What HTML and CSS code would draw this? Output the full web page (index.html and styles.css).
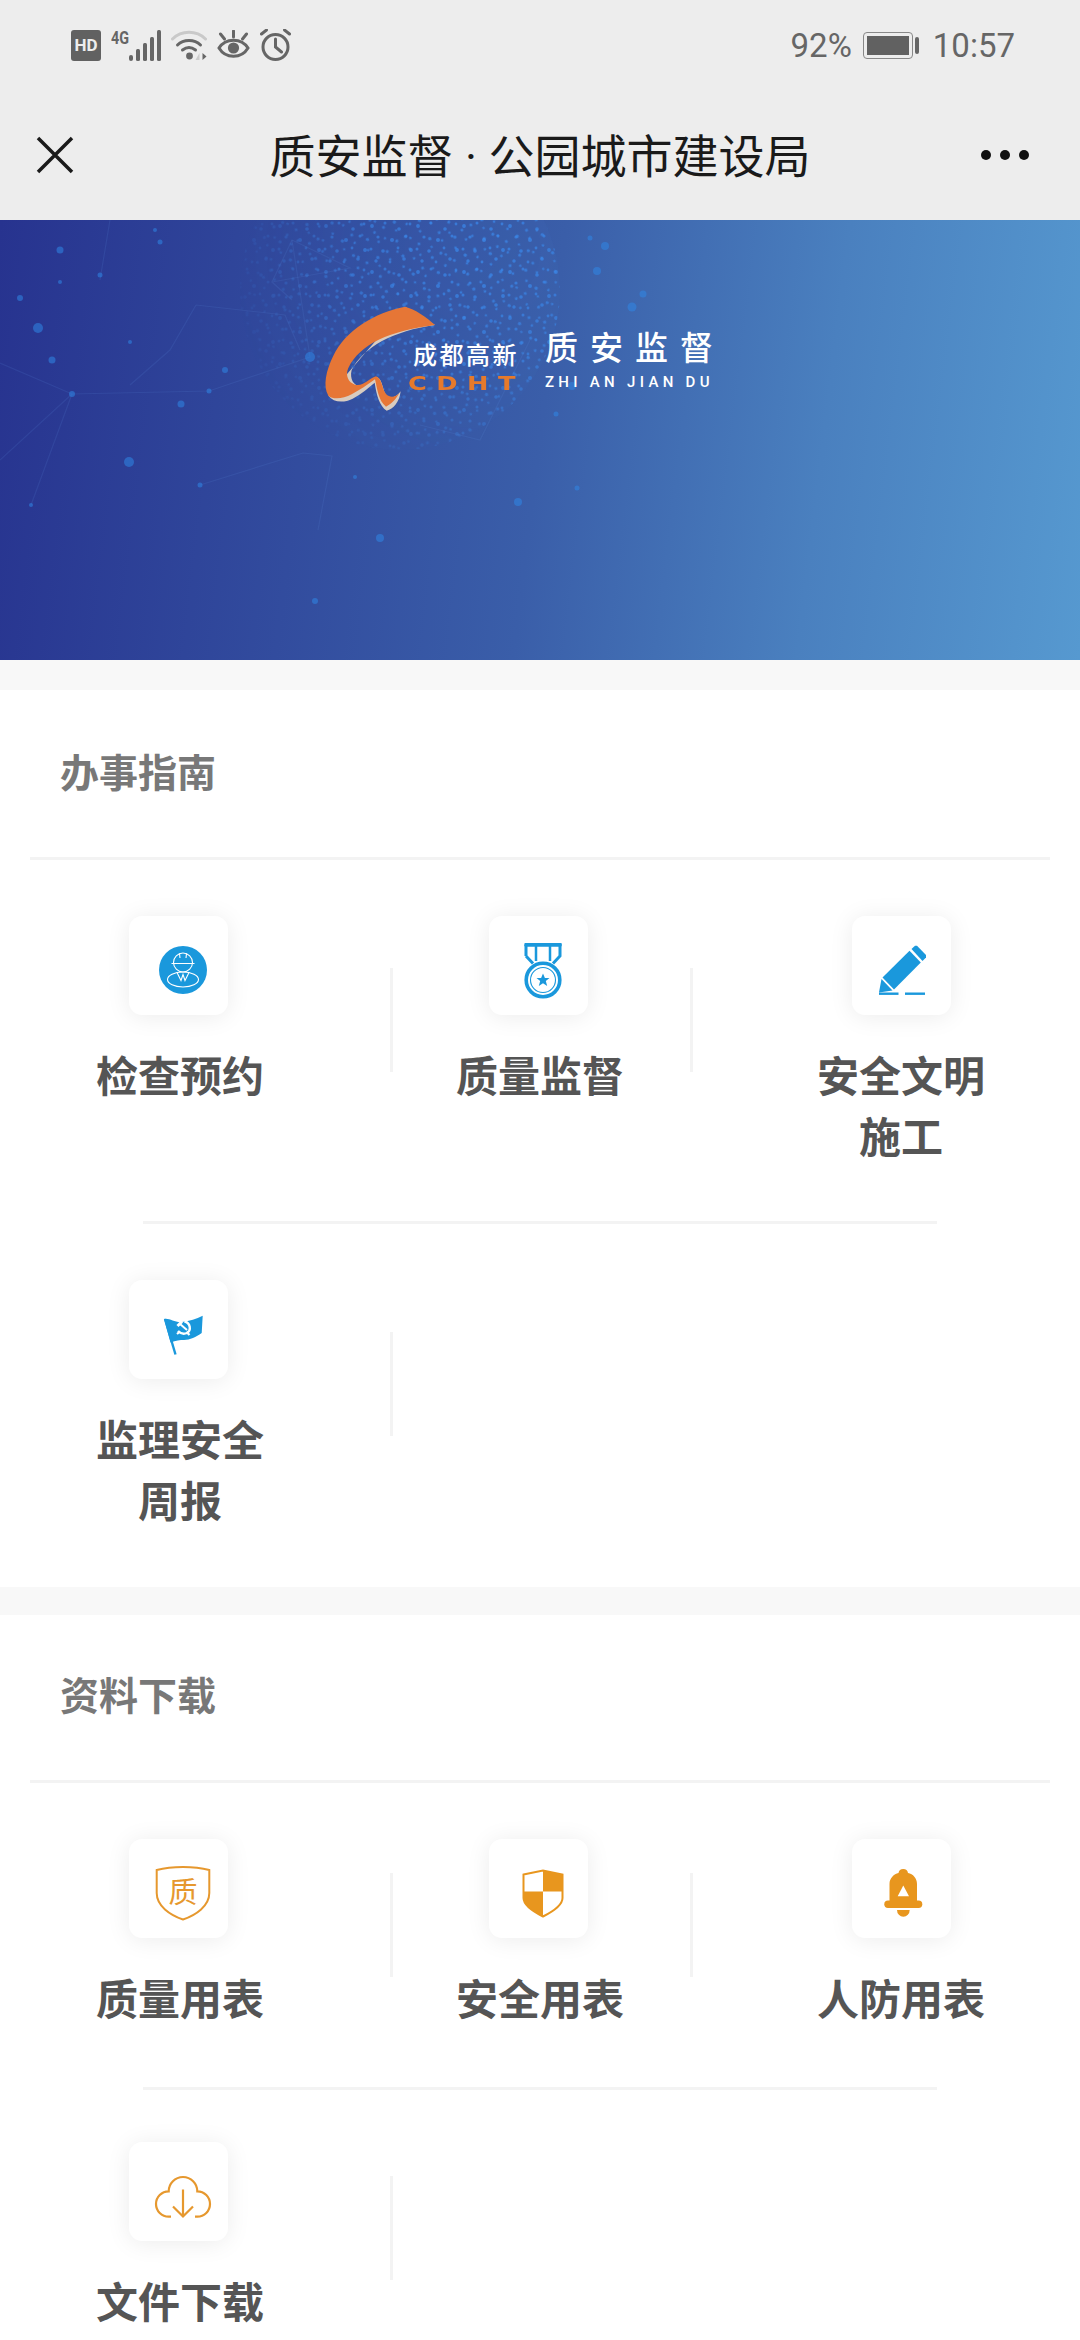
FILE: index.html
```html
<!DOCTYPE html>
<html lang="zh-CN">
<head>
    <meta charset="UTF-8">
    <meta name="viewport" content="width=device-width, initial-scale=1.0">
    <title>质安监督 · 公园城市建设局</title>
    <link rel="stylesheet" href="styles.css">
</head>
<body>
    <header class="top-bar">
        <div class="status-bar">
            <div class="status-left">
                <span class="hd-badge">HD</span>
                <svg class="status-icon" width="50" height="32" viewBox="0 0 50 32">
                    <text class="net-label" x="0" y="15" textLength="18" lengthAdjust="spacingAndGlyphs">4G</text>
                    <rect x="18" y="26" width="4" height="6" rx="2"/>
                    <rect x="25" y="20" width="4" height="12" rx="1.5"/>
                    <rect x="32" y="14" width="4" height="18" rx="1.5"/>
                    <rect x="39" y="8" width="4" height="24" rx="1.5"/>
                    <rect x="46" y="1" width="4" height="31" rx="1.5"/>
                </svg>
                <svg class="status-icon" width="36" height="32" viewBox="0 0 35 32">
                    <path d="M1 10C10 1 25 1 34 10" fill="none" stroke="#c9c9c9" stroke-width="3" stroke-linecap="round"/>
                    <path d="M6 16C12 10 23 10 29 16" fill="none" stroke="#666" stroke-width="3" stroke-linecap="round"/>
                    <path d="M11 21C15 18 20 18 24 21" fill="none" stroke="#666" stroke-width="3" stroke-linecap="round"/>
                    <circle cx="18" cy="27" r="3.4"/>
                    <path d="M24 31L28 24V31Z" fill="#ccc"/>
                    <path d="M31 24L35 27.5L31 31Z"/>
                </svg>
                <svg class="status-icon" width="33" height="30" viewBox="0 0 32 30">
                    <path d="M1.5 18C8 7.5 24 7.5 30.5 18C24 29 8 29 1.5 18Z" fill="none" stroke="#666" stroke-width="3"/>
                    <circle cx="16" cy="18" r="5.6"/>
                    <path d="M16 1V7M3 4L7 9M29 4L25 9" fill="none" stroke="#666" stroke-width="3" stroke-linecap="round"/>
                </svg>
                <svg class="status-icon" width="31" height="32" viewBox="0 0 30 32">
                    <circle cx="15" cy="18" r="12.5" fill="none" stroke="#666" stroke-width="3"/>
                    <path d="M15 10V18L21 23M1 5L6 1M29 5L24 1" fill="none" stroke="#666" stroke-width="3" stroke-linecap="round"/>
                </svg>
            </div>
            <div class="status-right">
                <span>92%</span>
                <span class="battery"><span class="battery-level"></span></span>
                <span>10:57</span>
            </div>
        </div>
        <nav class="nav-bar">
            <svg class="nav-close" width="38" height="38" viewBox="0 0 38 38">
                <path d="M2 2L36 36M36 2L2 36" fill="none" stroke="#1a1a1a" stroke-width="3.5"/>
            </svg>
            <h1 class="nav-title">质安监督 · 公园城市建设局</h1>
            <div class="nav-more"><i></i><i></i><i></i></div>
        </nav>
    </header>

    <section class="banner">
        <!-- 背景的地球和光点 -->
        <svg class="banner-bg" width="1080" height="440" viewBox="0 0 1080 440">
            <defs>
                <pattern id="dotsA" width="46" height="46" patternUnits="userSpaceOnUse">
                    <circle cx="4" cy="6" r="1.9"/><circle cx="17" cy="3" r="1.5"/><circle cx="31" cy="9" r="1.8"/>
                    <circle cx="42" cy="4" r="1.4"/><circle cx="10" cy="17" r="1.6"/><circle cx="24" cy="20" r="2"/>
                    <circle cx="38" cy="16" r="1.5"/><circle cx="3" cy="29" r="1.5"/><circle cx="15" cy="31" r="1.8"/>
                    <circle cx="30" cy="28" r="1.4"/><circle cx="43" cy="30" r="1.9"/><circle cx="8" cy="41" r="1.7"/>
                    <circle cx="22" cy="42" r="1.4"/><circle cx="36" cy="39" r="1.8"/>
                </pattern>
                <pattern id="dotsB" href="#dotsA" patternTransform="translate(17 23) rotate(25) scale(0.85)"/>
                <radialGradient id="globeFade" gradientUnits="userSpaceOnUse" cx="480" cy="30" r="270">
                    <stop offset="0" stop-color="#fff"/>
                    <stop offset="0.45" stop-color="#fff" stop-opacity="0.8"/>
                    <stop offset="0.75" stop-color="#fff" stop-opacity="0.28"/>
                    <stop offset="1" stop-color="#fff" stop-opacity="0"/>
                </radialGradient>
                <mask id="globeMask">
                    <rect x="200" y="0" width="380" height="300" fill="url(#globeFade)"/>
                </mask>
            </defs>
            <g mask="url(#globeMask)">
                <circle class="globe-tint" cx="400" cy="70" r="160"/>
                <circle cx="400" cy="70" r="160" fill="url(#dotsA)"/>
                <circle cx="400" cy="70" r="160" fill="url(#dotsB)"/>
            </g>
            <g class="net-lines">
                <path d="M0 143L72 174L209 171L310 137L292 20"/>
                <path d="M72 174L31 285M0 240L72 174"/>
                <path d="M303 233L200 265M303 233L332 236L318 310"/>
                <path d="M292 80L272 62L350 48L292 20L272 62"/>
                <path d="M196 85L285 95L300 130M196 85L170 130L130 165"/>
                <path d="M110 0L100 60M530 120L480 220L420 205"/>
            </g>
            <g class="net-dots">
                <circle cx="38" cy="108" r="5"/><circle cx="129" cy="242" r="5"/><circle cx="310" cy="137" r="5"/>
                <circle cx="632" cy="87" r="4.5"/><circle cx="597" cy="51" r="4"/><circle cx="605" cy="26" r="4"/>
                <circle cx="643" cy="74" r="3.5"/><circle cx="572" cy="166" r="4"/><circle cx="518" cy="282" r="4"/>
                <circle cx="380" cy="318" r="4"/><circle cx="315" cy="381" r="3"/><circle cx="181" cy="184" r="3.5"/>
                <circle cx="556" cy="194" r="2.5"/><circle cx="577" cy="268" r="2.5"/><circle cx="72" cy="174" r="3"/>
                <circle cx="20" cy="78" r="3"/><circle cx="60" cy="30" r="3.5"/><circle cx="160" cy="22" r="2.5"/>
                <circle cx="225" cy="150" r="3"/><circle cx="52" cy="140" r="3.5"/><circle cx="100" cy="55" r="2.5"/>
                <circle cx="209" cy="171" r="2.5"/><circle cx="130" cy="122" r="2"/><circle cx="200" cy="265" r="2.5"/>
                <circle cx="31" cy="285" r="2"/><circle cx="355" cy="257" r="2"/><circle cx="60" cy="62" r="2"/>
                <circle cx="155" cy="10" r="2"/><circle cx="590" cy="18" r="2.5"/>
            </g>
        </svg>
        <div class="banner-logo">
            <svg class="logo-mark" width="120" height="110" viewBox="120 70 360 330">
                <path class="swoosh-edge" d="M375 78L465 133C340 150 250 200 215 268C208 295 222 316 240 316C262 316 275 296 292 290C310 300 306 330 320 345C332 355 350 350 362 332C358 365 340 385 320 390C298 375 290 345 284 306C265 322 245 340 218 354C190 368 160 365 145 345Z"/>
                <path class="swoosh-main" d="M375 78C285 95 195 150 160 225C138 270 128 315 145 345C160 358 190 354 215 341C240 328 262 312 285 296C292 325 295 360 318 378C330 372 345 360 358 338C345 350 330 352 318 340C305 325 308 295 288 287C265 295 250 318 225 312C205 305 195 285 205 262C240 190 330 150 465 133C440 110 405 85 375 78Z"/>
            </svg>
            <div class="logo-brand">
                <span class="brand-cn">成都高新</span>
                <span class="brand-en">CDHT</span>
            </div>
            <div class="logo-name">
                <span class="name-cn">质安监督</span>
                <span class="name-en">ZHI AN JIAN DU</span>
            </div>
        </div>
    </section>

    <section class="panel">
        <h2 class="panel-title">办事指南</h2>
        <div class="tile-row">
            <div class="tile-cell">
                <div class="tile">
                    <svg class="tile-icon" width="66" height="66" viewBox="0 0 66 66">
                        <circle cx="33" cy="33" r="24" fill="#1a98dc"/>
                        <g fill="none" stroke="#fff" stroke-width="1.1">
                            <circle cx="33" cy="25.500" r="9.500"/>
                            <path d="M21.500 26.500H44.500M29.500 16.500L30 21M36.500 16.500L36 21"/>
                            <ellipse cx="33" cy="42.500" rx="15.500" ry="7.500"/>
                            <path d="M27 35.500L31 43.500L33 37.500L35 43.500L39 35.500"/>
                        </g>
                    </svg>
                </div>
                <div class="tile-label">检查预约</div>
            </div>
            <div class="tile-cell">
                <div class="tile">
                    <svg class="tile-icon" width="66" height="66" viewBox="0 0 66 66">
                        <g fill="none" stroke="#1a98dc">
                            <path d="M16 8H50V19L43 26.500M16 19L23 26.500M16 8V19" stroke-width="3"/>
                            <path d="M26 9V24M40 9V24" stroke-width="2.500"/>
                            <rect x="14.300" y="6" width="37.400" height="3.500" rx="1" fill="#1a98dc" stroke="none"/>
                            <circle cx="33" cy="43" r="16.800" stroke-width="3.600"/>
                            <circle cx="33" cy="43" r="12.500" stroke-width="1.100"/>
                        </g>
                        <path d="M33 36.500L34.900 41H39.500L35.800 44L37.200 49L33 46.200L28.800 49L30.200 44L26.500 41H31.100Z" fill="#1a98dc"/>
                    </svg>
                </div>
                <div class="tile-label">质量监督</div>
            </div>
            <div class="tile-cell">
                <div class="tile">
                    <svg class="tile-icon" width="66" height="66" viewBox="0 0 66 66">
                        <path d="M38.500 12L42 8.800L44 8.800L53 18V20.500L49.500 24Z" fill="#1a98dc"/>
                        <path d="M9.500 40.500L36.500 13.700L47.800 25.500L21 52.500Z" fill="#1a98dc"/>
                        <path d="M8.500 42L19.500 53.500L6 55.500Z" fill="#1a98dc"/>
                        <rect x="6" y="55.500" width="19.500" height="2.400" fill="#1a98dc"/>
                        <rect x="32" y="55.500" width="20" height="2.400" fill="#1a98dc"/>
                    </svg>
                </div>
                <div class="tile-label">安全文明施工</div>
            </div>
        </div>
        <div class="row-line"></div>
        <div class="tile-row">
            <div class="tile-cell">
                <div class="tile">
                    <svg class="tile-icon" width="66" height="66" viewBox="0 0 66 66">
                        <path d="M14 18C20 17 25 22 32 21C40 20 46 18 52.700 14.800L51.700 32C46 36 40 39 34 39C30 39 26 39.500 20.500 41.500Z" fill="#1a98dc"/>
                        <path d="M15 18L25.500 53.500" stroke="#1a98dc" stroke-width="2.400" fill="none"/>
                        <g fill="none" stroke="#fff">
                            <path d="M34.500 20.500C40.500 22 41.500 29 37 32C33.500 33.500 30.500 32.500 28 30" stroke-width="2.400"/>
                            <path d="M36.500 31L39.500 34M27 33L30 30.500" stroke-width="2.200"/>
                            <path d="M27.500 25L32 20.500" stroke-width="3"/>
                            <path d="M30 23L37 29" stroke-width="2"/>
                        </g>
                    </svg>
                </div>
                <div class="tile-label">监理安全周报</div>
            </div>
        </div>
    </section>

    <section class="panel">
        <h2 class="panel-title">资料下载</h2>
        <div class="tile-row">
            <div class="tile-cell">
                <div class="tile">
                    <svg class="tile-icon" width="66" height="66" viewBox="0 0 66 66">
                        <path d="M6.700 10C22 6 44 6 59.300 10V33C59.300 46 46 55 33 59.500C20 55 6.700 46 6.700 33Z" fill="none" stroke="#e6982e" stroke-width="2"/>
                        <text class="icon-char" x="33" y="43" text-anchor="middle">质</text>
                    </svg>
                </div>
                <div class="tile-label">质量用表</div>
            </div>
            <div class="tile-cell">
                <div class="tile">
                    <svg class="tile-icon" width="66" height="66" viewBox="0 0 66 66">
                        <path d="M13.500 14.500L33 10.500L52.500 14.500V38C52.500 46 42 52 33 56.500C24 52 13.500 46 13.500 38Z" fill="none" stroke="#e8961e" stroke-width="2"/>
                        <path d="M33 10.500L52.500 14.500V31.500H33Z" fill="#e8961e"/>
                        <path d="M13.500 31.500H33V56.500C24 52 13.500 46 13.500 38Z" fill="#e8961e"/>
                    </svg>
                </div>
                <div class="tile-label">安全用表</div>
            </div>
            <div class="tile-cell">
                <div class="tile">
                    <svg class="tile-icon" width="66" height="66" viewBox="0 0 66 66">
                        <path d="M16.500 41V24C16.500 18 21 14 25.500 13A4.800 4.800 0 0 1 35 13C40 14 44 18 44 24V41Z" fill="#e8961e"/>
                        <rect x="11.300" y="40.500" width="38" height="7.500" rx="3.700" fill="#e8961e"/>
                        <path d="M24 50H36.700A6.300 6.800 0 0 1 24 50Z" fill="#e8961e"/>
                        <path d="M30.300 25.500L36 36.200H24.700Z" fill="#fff"/>
                    </svg>
                </div>
                <div class="tile-label">人防用表</div>
            </div>
        </div>
        <div class="row-line"></div>
        <div class="tile-row">
            <div class="tile-cell">
                <div class="tile">
                    <svg class="tile-icon" width="66" height="66" viewBox="0 0 66 66">
                        <path d="M21 53.700H18.700A12.700 12.700 0 0 1 18.700 28.300A13.600 13.600 0 0 1 47.300 28.300A12.700 12.700 0 0 1 47.300 53.700H45" fill="none" stroke="#e6982e" stroke-width="2.200"/>
                        <path d="M33 26.500V53.500M23 43.500L33 53.500L43 43.500" fill="none" stroke="#e6982e" stroke-width="2.200"/>
                    </svg>
                </div>
                <div class="tile-label">文件下载</div>
            </div>
        </div>
    </section>
</body>
</html>
```

FILE: styles.css
```css
html, body {
    margin: 0;
    height: 2340px;
    overflow: hidden;
}
body {
    font-family: Roboto, "Noto Sans CJK SC", sans-serif;
    background-color: #f8f8f8;
    color: #333;
}

/* 顶部 */
.top-bar {
    height: 220px;
    background-color: #ededed;
}
.status-bar {
    height: 90px;
    padding: 0 65px 0 71px;
    display: flex;
    justify-content: space-between;
    align-items: center;
}
.status-left {
    display: flex;
    align-items: center;
    gap: 10px;
}
.status-icon {
    fill: #666;
}
.hd-badge {
    width: 30px;
    height: 31px;
    display: flex;
    justify-content: center;
    align-items: center;
    border-radius: 3px;
    background-color: #616161;
    color: #ededed;
    font-size: 17px;
    font-weight: 700;
}
.net-label {
    font-family: Roboto, sans-serif;
    font-size: 19px;
    font-weight: 700;
}
.status-right {
    display: flex;
    align-items: center;
    gap: 11px;
    color: #666;
    font-size: 33px;
}
.battery {
    position: relative;
    width: 50px;
    height: 27px;
    margin-right: 9px;
    padding: 3px;
    box-sizing: border-box;
    border: 1px solid #888;
    border-radius: 4px;
}
.battery::after {
    content: "";
    position: absolute;
    right: -7px;
    top: 4px;
    width: 4px;
    height: 17px;
    border-radius: 2px;
    background-color: #666;
}
.battery-level {
    display: block;
    width: 42px;
    height: 19px;
    background-color: #616161;
}
.nav-bar {
    height: 130px;
    padding: 0 51px;
    display: grid;
    grid-template-columns: 1fr auto 1fr;
    align-items: center;
}
.nav-close {
    margin-left: -15px;
}
.nav-title {
    margin: 3px 0 0;
    color: #1a1a1a;
    font-size: 46px;
    font-weight: 400;
    line-height: 1;
}
.nav-more {
    display: flex;
    justify-content: flex-end;
    gap: 9px;
}
.nav-more i {
    width: 10px;
    height: 10px;
    border-radius: 50%;
    background-color: #111;
}

/* 横幅 */
.banner {
    position: relative;
    height: 440px;
    margin-bottom: 30px;
    padding-top: 84px;
    box-sizing: border-box;
    background: linear-gradient(97deg, #27338f 0%, #3a5ea9 50%, #4a80bf 75%, #5699d0 100%);
}
.banner-bg {
    position: absolute;
    left: 0;
    top: 0;
}
.globe-tint {
    fill: #3f80dc;
    fill-opacity: 0.06;
}
#dotsA circle {
    fill: #3a8cf0;
    fill-opacity: 0.7;
}
.net-lines path {
    fill: none;
    stroke: #5f8ee0;
    stroke-opacity: 0.15;
    stroke-width: 1.2;
}
.net-dots circle {
    fill: #2f86e6;
    fill-opacity: 0.55;
}
.banner-logo {
    position: relative;
    display: flex;
    align-items: flex-start;
    padding-left: 320px;
    color: #fff;
    font-family: "Noto Sans CJK SC", sans-serif;
}
.swoosh-edge {
    fill: #d8ccc0;
}
.swoosh-main {
    fill: #e67636;
}
.logo-brand {
    width: 110px;
    margin-left: -27px;
    padding-top: 34px;
    display: flex;
    flex-direction: column;
}
.brand-cn {
    font-size: 24px;
    font-weight: 500;
    letter-spacing: 2.500px;
    line-height: 32px;
    white-space: nowrap;
}
.brand-en {
    margin: 3px 0 0 -5px;
    color: #e67a2c;
    font-family: "DejaVu Sans", sans-serif;
    font-size: 19px;
    font-weight: 700;
    letter-spacing: 7px;
    line-height: 20px;
    transform: scaleX(1.35);
    transform-origin: left center;
}
.logo-name {
    margin-left: 22px;
    padding-top: 21px;
    display: flex;
    flex-direction: column;
}
.name-cn {
    font-size: 33px;
    font-weight: 500;
    letter-spacing: 12px;
    line-height: 42px;
    white-space: nowrap;
}
.name-en {
    margin-top: 6px;
    font-family: Roboto, sans-serif;
    font-size: 15px;
    font-weight: 500;
    letter-spacing: 4.300px;
    line-height: 18px;
    white-space: nowrap;
}

/* 卡片 */
.panel {
    margin-bottom: 28px;
    padding-bottom: 2px;
    background-color: #fff;
}
.panel-title {
    height: 170px;
    margin: 0 30px;
    padding: 0 0 8px 30px;
    box-sizing: border-box;
    display: flex;
    align-items: center;
    border-bottom: 3px solid #f3f3f3;
    color: #787878;
    font-family: "Noto Sans CJK SC", sans-serif;
    font-size: 39px;
    font-weight: 700;
}
.panel + .panel .panel-title {
    height: 168px;
    padding-bottom: 10px;
}
.tile-row {
    display: grid;
    grid-template-columns: repeat(3, 360px);
}
.tile-cell {
    position: relative;
    padding: 56px 0 56px;
    display: flex;
    flex-direction: column;
    align-items: center;
}
/* 竖线 */
.tile-cell::after {
    content: "";
    position: absolute;
    top: 30%;
    left: 390px;
    width: 3px;
    height: 104px;
    background-color: #f3f3f3;
}
.tile-cell:nth-child(2)::after {
    left: 330px;
}
.tile-cell:nth-child(3)::after {
    display: none;
}
.row-line {
    height: 3px;
    margin: 0 143px;
    background-color: #f3f3f3;
}
.panel + .panel .row-line {
    margin-top: 4px;
    margin-bottom: -4px;
}
.tile {
    width: 99px;
    height: 99px;
    margin-right: 3px;
    padding: 8px 0 0 9px;
    box-sizing: border-box;
    display: flex;
    justify-content: center;
    align-items: center;
    border-radius: 13px;
    background-color: #fff;
    box-shadow: 0 2px 24px rgba(0, 0, 0, 0.08);
}
.tile-cell:nth-child(3) .tile {
    margin: 0 0 0 3px;
}
.tile-icon {
    flex-shrink: 0;
}
.icon-char {
    fill: #e6982e;
    font-family: "Noto Sans CJK SC", sans-serif;
    font-size: 29px;
}
.tile-label {
    width: 180px;
    margin-top: 28px;
    color: #555;
    font-family: "Noto Sans CJK SC", sans-serif;
    font-size: 42px;
    font-weight: 700;
    line-height: 61px;
    text-align: center;
}
.tile-cell:nth-child(3) .tile-label {
    margin-left: 2px;
}
```
